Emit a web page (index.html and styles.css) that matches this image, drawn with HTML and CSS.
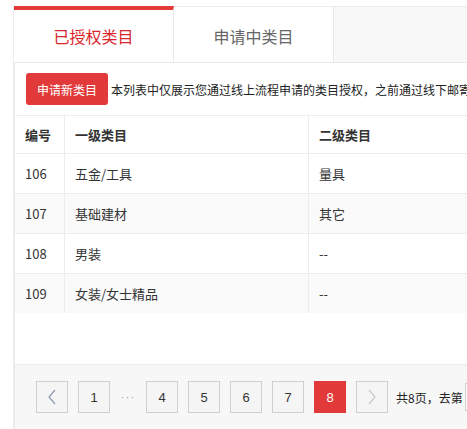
FILE: index.html
```html
<!DOCTYPE html>
<html lang="zh-CN">
<head>
<meta charset="utf-8">
<title>类目授权</title>
<link rel="stylesheet" href="styles.css">
</head>
<body>
<div class="page">
  <div class="tabs">
    <div class="tab active">已授权类目</div>
    <div class="tab">申请中类目</div>
    <div class="tab-rest"></div>
  </div>
  <div class="panel">
    <div class="toolbar">
      <button class="btn-apply">申请新类目</button>
      <span class="notice">本列表中仅展示您通过线上流程申请的类目授权，之前通过线下邮寄资料申请的类目授权不在此列表中展示</span>
    </div>
    <table class="grid">
      <thead>
        <tr><th class="c-id">编号</th><th class="c-l1">一级类目</th><th class="c-l2">二级类目</th></tr>
      </thead>
      <tbody>
        <tr><td>106</td><td>五金/工具</td><td>量具</td></tr>
        <tr class="alt"><td>107</td><td>基础建材</td><td>其它</td></tr>
        <tr><td>108</td><td>男装</td><td>--</td></tr>
        <tr class="alt"><td>109</td><td>女装/女士精品</td><td>--</td></tr>
      </tbody>
    </table>
    <div class="spacer"></div>
    <div class="pager">
      <span class="pg arrow"><svg width="10" height="16" viewBox="0 0 10 16"><path d="M8 1 L2 8 L8 15" fill="none" stroke="#8a9bb0" stroke-width="1.2"/></svg></span>
      <span class="pg">1</span>
      <span class="dots">···</span>
      <span class="pg">4</span>
      <span class="pg">5</span>
      <span class="pg">6</span>
      <span class="pg">7</span>
      <span class="pg current">8</span>
      <span class="pg arrow"><svg width="10" height="16" viewBox="0 0 10 16"><path d="M2 1 L8 8 L2 15" fill="none" stroke="#c8c8c8" stroke-width="1.2"/></svg></span>
      <span class="total">共8页，去第</span>
      <span class="goto"></span>
    </div>
  </div>
</div>
</body>
</html>
```

FILE: styles.css
```css
html, body {
  margin: 0;
  padding: 0;
  background: #fff;
  overflow: hidden;
}
body {
  font-family: "Noto Sans CJK SC", "Microsoft YaHei", sans-serif;
  color: #333;
}
.page {
  padding: 6px 0 0 13px;
  width: 720px;
}
.tabs {
  display: flex;
  height: 55px;
  border-top: 1px solid #ececec;
  border-bottom: 1px solid #e8e8e8;
  border-left: 1px solid #ececec;
  background: #f8f8f8;
}
.tab {
  width: 160px;
  background: #fff;
  display: flex;
  align-items: center;
  justify-content: center;
  font-size: 16px;
  color: #666;
  border-right: 1px solid #e8e8e8;
  padding-top: 3px;
  box-sizing: border-box;
}
.tab.active {
  color: #d9262b;
  border-top: 4px solid #e23a3a;
  margin-top: -1px;
  padding-top: 0;
}
.tab-rest {
  flex: 1;
}
.panel {
  border-left: 2px solid #ececec;
  background: #fff;
}
.toolbar {
  display: flex;
  align-items: center;
  padding: 10px 0 10px 11px;
  white-space: nowrap;
}
.btn-apply {
  width: 82px;
  height: 32px;
  border: none;
  border-radius: 3px;
  background: #e23a3a;
  color: #fff;
  font-family: inherit;
  font-size: 12px;
  padding: 0;
  margin-right: 3px;
}
.notice {
  font-size: 12px;
  color: #222;
}
.grid {
  border-collapse: collapse;
  width: 100%;
  font-size: 13px;
}
.grid th, .grid td {
  border: 1px solid #ececec;
  text-align: left;
  padding: 0 10px;
  border-left: none;
}
.grid th + th, .grid td + td {
  border-left: 1px solid #ececec;
}
.grid th {
  height: 37px;
  font-weight: bold;
  color: #333;
}
.grid td {
  height: 39px;
  color: #333;
}
.grid tbody tr:last-child td {
  border-bottom: none;
}
.c-id { width: 29px; }
.c-l1 { width: 223px; }
.grid tr.alt td {
  background: #fafafa;
}
.spacer {
  height: 51px;
  border-bottom: 1px solid #ececec;
}
.pager {
  background: #f7f7f7;
  height: 64px;
  display: flex;
  align-items: center;
  padding: 0 0 0 21px;
  gap: 10px;
  white-space: nowrap;
}
.pg {
  width: 32px;
  height: 32px;
  box-sizing: border-box;
  border: 1px solid #cfcfcf;
  background: #f5f5f5;
  display: flex;
  align-items: center;
  justify-content: center;
  font-size: 13px;
  color: #333;
  font-family: "Liberation Sans", "Noto Sans CJK SC", sans-serif;
}
.pg.current {
  background: #e23a3a;
  border-color: #e23a3a;
  color: #fff;
}
.dots {
  width: 16px;
  display: flex;
  justify-content: center;
  color: #aaa;
  font-family: "Liberation Sans", sans-serif;
  font-size: 12px;
  letter-spacing: 1px;
}
.total {
  font-size: 12px;
  color: #222;
  margin-left: -2px;
}
.goto {
  width: 40px;
  height: 26px;
  border: 1px solid #cfcfcf;
  background: #fff;
  margin-left: -8px;
}
```
